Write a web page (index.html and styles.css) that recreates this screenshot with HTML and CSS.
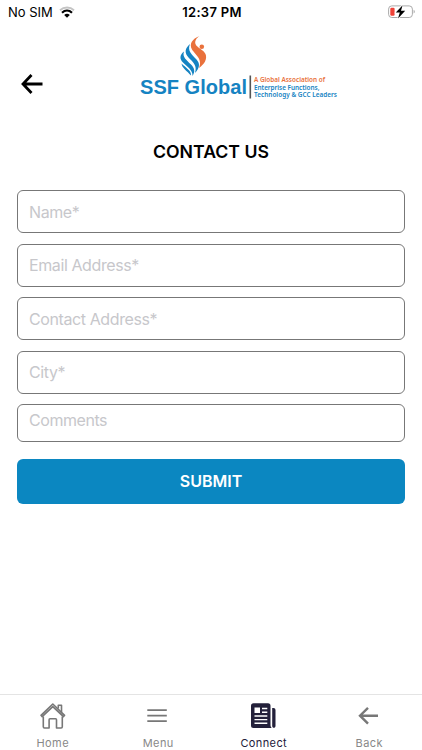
FILE: index.html
```html
<!DOCTYPE html>
<html lang="en">
<head>
    <meta charset="UTF-8">
    <meta name="viewport" content="width=device-width, initial-scale=1.0">
    <title>Contact Us</title>

    <link rel="stylesheet" href="styles.css">
</head>

<body>

    <div class="status-bar">
        <div class="carrier">
            <span>No SIM</span>
            <svg class="wifi" width="16" height="12" viewBox="0 0 16 12" fill="none">
                <path d="M1 4.2C5 .6 11 .6 15 4.2" stroke="#c4c4c4" stroke-width="1.9"/>
                <path d="M3 6.700C6 4 10 4 13 6.700" stroke="#000" stroke-width="2.2"/>
                <path d="M5.2 9C7 7.400 9 7.400 10.800 9L8 11.800z" fill="#000"/>
            </svg>
        </div>
        <div class="time">12:37 PM</div>
        <svg class="battery" width="28" height="14" viewBox="0 0 28 14">
            <rect x=".6" y=".9" width="23.8" height="11.6" rx="3.2" fill="#fff" stroke="#aaa"/>
            <path d="M25.6 4.8c1.6.6 1.6 3.2 0 3.8z" fill="#aaa"/>
            <rect x="2.3" y="2.7" width="4.3" height="8" rx="1.2" fill="#ee4238"/>
            <path d="M14.6.2L7.8 7.5h4L10 13.6l7.2-7.8h-4.2z" fill="#000" stroke="#fff" stroke-width="1.4" paint-order="stroke"/>
        </svg>
    </div>

    <header class="header">
        <button type="button" class="back-btn" aria-label="Go back">
            <svg width="22" height="20" viewBox="0 0 22 20" fill="none" stroke="#000" stroke-width="2.8">
                <path d="M21.5 10H2.5M10.5 1L2 10l8.5 9"/>
            </svg>
        </button>
        <svg class="logo" width="200" height="66" viewBox="0 0 200 66">
            <!-- flame -->
            <g fill="#1583c2">
                <path d="M44 21.500C39.500 25 39.500 29 43 32.500C47 36.500 53 40 52.500 46C55.500 41.500 54.500 38 51 34.500C46.500 30 42 27 44 21.500z"/>
                <path d="M41.500 33.500C42 38 47 41 51 45.500C51.500 40.500 45.500 37.500 41.500 33.500z"/>
                <path d="M50 14C44.500 18.500 44.500 23 48.500 27.500C53 32 57.500 35.500 55 43C59.500 38 60.500 34 56.500 29.500C52 24.500 47 21 50 14z"/>
            </g>
            <path d="M59.500 6C52 9 49 14 52 19.500C55 24.500 63 29 59 38C64.500 34 67.500 29 65.500 24C63.500 19.500 57 18 55.500 14C54.500 11 56.500 8 59.500 6z" fill="#e9713c"/>
            <circle cx="61.800" cy="16.800" r="2.300" fill="#e9713c"/>
            <text class="logo-name" x="0" y="64" textLength="107">SSF Global</text>
            <rect x="109.500" y="45.500" width="1.600" height="23" fill="#555"/>
            <g class="logo-tagline">
                <text class="orange" x="114" y="52.200" textLength="71">A Global Association of</text>
                <text x="114" y="59.700" textLength="65.500">Enterprise Functions,</text>
                <text x="114" y="67.200" textLength="83">Technology &amp; GCC Leaders</text>
            </g>
        </svg>
    </header>

    <main class="content">
        <h1>CONTACT US</h1>

        <form id="form">
            <input type="text" class="form-control" placeholder="Name*" aria-label="Name">
            <input type="email" class="form-control" placeholder="Email Address*" aria-label="Email Address">
            <input type="text" class="form-control" placeholder="Contact Address*" aria-label="Contact Address">
            <input type="text" class="form-control" placeholder="City*" aria-label="City">
            <textarea class="form-control comments" placeholder="Comments" aria-label="Comments"></textarea>
            <button type="button" class="submit-btn">SUBMIT</button>
        </form>
    </main>

    <nav class="tab-bar">
        <a class="tab">
            <svg width="28" height="28" viewBox="0 0 28 28" fill="none" stroke="#777" stroke-width="1.6" stroke-linejoin="round">
                <path d="M2 13.300L13.800 2l11.800 11.300-1.200 1.300L13.800 4.700 3.200 14.600z"/>
                <path d="M19.300 6.500V3.200h3.200v7"/>
                <path d="M4.300 14.500v10.300c0 .8.400 1.200 1.200 1.200h4.600v-8.300c0-.6.300-.9.900-.9h5.600c.6 0 .9.300.9.900V26h4.600c.8 0 1.200-.4 1.200-1.200V14.500"/>
            </svg>
            <span>Home</span>
        </a>
        <a class="tab">
            <svg width="28" height="28" viewBox="0 0 28 28" stroke="#777" stroke-width="1.700">
                <path d="M3.300 8.200h19.500M3.300 13.700h19.500M3.300 19.200h19.500"/>
            </svg>
            <span>Menu</span>
        </a>
        <a class="tab active">
            <svg width="28" height="28" viewBox="0 0 28 28">
                <path d="M3.500 1.200h14.500A2.500 2.500 0 0 1 20.500 3.700v19.500c0 1 .4 2 1.200 2.700H3.500A2.500 2.500 0 0 1 1 23.400V3.700A2.500 2.500 0 0 1 3.500 1.200z" fill="#23203a"/>
                <path d="M22.200 6h1.300a2 2 0 0 1 2 2v15.700c0 2.800-3.300 2.800-3.300 0z" fill="#23203a"/>
                <rect x="4.500" y="5.500" width="5.500" height="5.500" fill="#fff"/>
                <path d="M12 6.500h5.300M12 10.300h5.300M4.500 14h12.800M4.500 17.600h12.800M4.500 21.200h12.800" stroke="#fff" stroke-width="1.400"/>
            </svg>
            <span>Connect</span>
        </a>
        <a class="tab">
            <svg width="28" height="28" viewBox="0 0 28 28" fill="none" stroke="#777" stroke-width="2.400">
                <path d="M23 13.700H5M13 5.800L5 13.700l8 8"/>
            </svg>
            <span>Back</span>
        </a>
    </nav>

</body>
</html>
```
FILE: styles.css
```css
* {
    box-sizing: border-box;
}

body {
    font-family: 'Inter', 'Liberation Sans', sans-serif;
    background-color: #fff;
    color: #000;
    margin: 0;
    height: 100vh;
    display: flex;
    flex-direction: column;
    overflow: hidden;
}

button {
    border: none;
    padding: 0;
    cursor: pointer;
}

.status-bar {
    display: grid;
    grid-template-columns: 1fr auto 1fr;
    align-items: center;
    height: 24px;
    padding: 0 6px 0 8px;
    font-size: 13px;
}

.carrier {
    display: flex;
    align-items: center;
    gap: 6px;
}

.time {
    font-weight: 600;
    letter-spacing: 0.3px;
}

.battery {
    justify-self: end;
    margin-top: -1px;
}

.header {
    display: flex;
    align-items: flex-start;
    height: 80px;
    padding: 6px 20px 0 21px;
}

.back-btn {
    display: flex;
    background: none;
    margin-top: 44px;
}

.logo {
    margin-left: 97px;
    overflow: visible;
}

.logo-name {
    font-family: 'Liberation Sans', sans-serif;
    font-size: 20px;
    font-weight: bold;
    fill: #1583c2;
}

.logo-tagline {
    font-family: 'Noto Sans', sans-serif;
    font-size: 6.4px;
    font-weight: 600;
    fill: #1583c2;
}

.logo-tagline .orange {
    fill: #e9713c;
}

.content {
    flex: 1;
    padding: 37px 17px 0;
}

h1 {
    margin: 0 0 27.4px;
    font-size: 17.7px;
    line-height: 22px;
    font-weight: 600;
    text-align: center;
}

form {
    display: flex;
    flex-direction: column;
    gap: 10.5px;
}

.form-control {
    width: 100%;
    height: 43px;
    margin: 0;
    padding: 0 11px;
    border: 1px solid #777;
    border-radius: 6px;
    background-color: #fff;
    font-family: inherit;
    font-size: 16px;
    letter-spacing: -0.4px;
}

.form-control::placeholder {
    color: #c7c7cb;
    opacity: 1;
}

.comments {
    height: 37.5px;
    padding-top: 5px;
    line-height: 20px;
    letter-spacing: -0.45px;
    resize: none;
    overflow: hidden;
}

.submit-btn {
    height: 45px;
    margin-top: 6.6px;
    padding-bottom: 1px;
    border-radius: 6px;
    background-color: #0b87c1;
    color: #fff;
    font-family: inherit;
    font-size: 16px;
    font-weight: 600;
}

.tab-bar {
    display: grid;
    grid-template-columns: repeat(4, 1fr);
    height: 56px;
    border-top: 1px solid #e4e4e4;
}

.tab {
    display: flex;
    flex-direction: column;
    align-items: center;
    padding-top: 7px;
    gap: 6px;
    color: #888;
    font-size: 11px;
    line-height: 14px;
    letter-spacing: 0.4px;
}

.tab.active {
    color: #23203a;
}
```
